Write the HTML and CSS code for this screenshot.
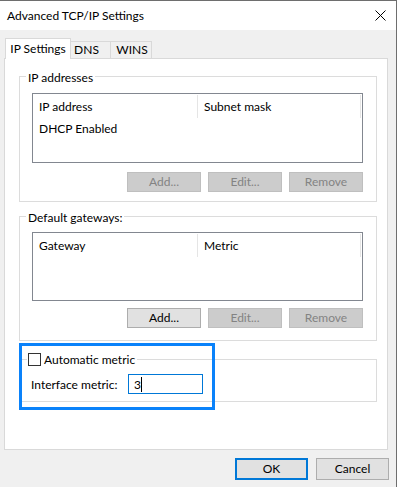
FILE: index.html
```html
<!DOCTYPE html>
<html>
<head>
<meta charset="utf-8">
<link rel="stylesheet" href="styles.css">
</head>
<body>
<div class="window">
  <div class="titlebar">
    <span class="title">Advanced TCP/IP Settings</span>
    <svg class="close" width="11" height="11" viewBox="0 0 11 11"><path d="M0.5 0.5 L10.5 10.5 M10.5 0.5 L0.5 10.5" stroke="#000" stroke-width="1" fill="none"/></svg>
  </div>
  <div class="client">
    <div class="tabs">
      <div class="tab active">IP Settings</div>
      <div class="tab t-dns">DNS</div>
      <div class="tab t-wins">WINS</div>
    </div>
    <div class="panel">
      <div class="group g1">
        <span class="legend">IP addresses</span>
        <div class="list l1">
          <div class="lhead">
            <div class="col c1">IP address</div>
            <div class="col c2">Subnet mask</div>
          </div>
          <div class="lrow">
            <div class="col c1">DHCP Enabled</div>
          </div>
        </div>
        <div class="btnrow r1">
          <div class="btn disabled">Add...</div>
          <div class="btn disabled">Edit...</div>
          <div class="btn disabled">Remove</div>
        </div>
      </div>
      <div class="group g2">
        <span class="legend">Default gateways:</span>
        <div class="list l2">
          <div class="lhead">
            <div class="col c1">Gateway</div>
            <div class="col c2">Metric</div>
          </div>
        </div>
        <div class="btnrow r2">
          <div class="btn">Add...</div>
          <div class="btn disabled">Edit...</div>
          <div class="btn disabled">Remove</div>
        </div>
      </div>
      <div class="group g3">
        <span class="legend chk"><span class="box"></span><span>Automatic metric</span></span>
        <div class="metric">
          <span class="mlabel">Interface metric:</span>
          <div class="input"><span>3</span><span class="caret"></span></div>
        </div>
      </div>
    </div>
    <div class="footer">
      <div class="btn big default">OK</div>
      <div class="btn big">Cancel</div>
    </div>
  </div>
  <div class="highlight"></div>
</div>
</body>
</html>
```
FILE: styles.css
```css
html, body {
  margin: 0;
  padding: 0;
}
body {
  width: 397px;
  height: 487px;
  overflow: hidden;
  font-family: "Lato", "Noto Sans", sans-serif;
  font-size: 12px;
  color: #000;
  background: #f0f0f0;
}
.window {
  position: relative;
  width: 397px;
  height: 487px;
  box-sizing: border-box;
  border-top: 1px solid #6e6e6e;
  border-right: 1px solid #6e6e6e;
  background: #f0f0f0;
}
.titlebar {
  height: 29px;
  background: #fff;
  display: flex;
  align-items: center;
  justify-content: space-between;
  padding: 0 10px 0 7px;
}
.title {
  line-height: 16px;
  margin-top: 0px;
}
.close {
  display: block;
  margin-top: -1px;
}
.client {
  padding-top: 8px;
}
.tabs {
  display: flex;
  align-items: flex-end;
  height: 20px;
  padding-left: 5px;
  position: relative;
  z-index: 2;
}
.tab {
  box-sizing: border-box;
  height: 17px;
  border: 1px solid #d9d9d9;
  border-bottom: none;
  border-left: none;
  background: #f0f0f0;
  line-height: 16px;
  text-align: center;
}
.tab.active {
  width: 66px;
  height: 21px;
  margin-bottom: -1px;
  border-left: 1px solid #d9d9d9;
  background: #fff;
  line-height: 19px;
}
.t-dns { width: 40px; padding-right: 10px; padding-left: 2px; }
.t-wins { width: 41px; padding-left: 2px; }
.panel {
  box-sizing: border-box;
  width: 384px;
  height: 392px;
  margin-left: 4px;
  border: 1px solid #d9d9d9;
  background: #fff;
  padding: 17px 0 0 14px;
  position: relative;
  z-index: 1;
}
.group {
  position: relative;
  box-sizing: border-box;
  width: 358px;
  border: 1px solid #dcdcdc;
  padding-left: 12px;
}
.g1 { height: 126px; padding-top: 16px; }
.g2 { height: 125px; padding-top: 15px; margin-top: 14px; }
.g3 { height: 43px; margin-top: 18px; padding-left: 11px; padding-top: 14px; }
.legend {
  position: absolute;
  top: -7px;
  left: 6px;
  padding: 0 2px;
  background: #fff;
  line-height: 16px;
}
.legend.chk {
  display: flex;
  align-items: center;
  left: 7px;
  top: -8px;
  padding: 0 2px 0 1px;
}
.box {
  width: 13px;
  height: 13px;
  box-sizing: border-box;
  border: 1px solid #333;
  background: #fff;
  margin-right: 3px;
  margin-top: -1px;
}
.list {
  box-sizing: border-box;
  width: 331px;
  border: 1px solid #828790;
  background: #fff;
}
.l1 { height: 70px; }
.l2 { height: 69px; }
.lhead {
  display: flex;
  height: 24px;
}
.col {
  box-sizing: border-box;
  padding-left: 6px;
  line-height: 24px;
}
.lhead .c1 {
  width: 165px;
  border-right: 1px solid #e5e5e5;
  margin-top: 1px;
  line-height: 24px;
  height: 23px;
}
.lhead .c2 {
  width: 163px;
  border-right: 1px solid #e5e5e5;
  margin-top: 1px;
  line-height: 24px;
  height: 23px;
}
.lrow {
  height: 20px;
  display: flex;
}
.lrow .col {
  line-height: 21px;
}
.btnrow {
  display: flex;
  gap: 7px;
  justify-content: flex-end;
  width: 331px;
  height: 20px;
}
.r1 { margin-top: 9px; }
.r2 { margin-top: 7px; }
.btn {
  box-sizing: border-box;
  width: 74px;
  height: 20px;
  border: 1px solid #adadad;
  background: #e1e1e1;
  text-align: center;
  line-height: 18px;
}
.btn.disabled {
  background: #cccccc;
  border-color: #bfbfbf;
  color: #838383;
}
.metric {
  display: flex;
  align-items: center;
  height: 20px;
}
.mlabel {
  width: 97px;
}
.input {
  box-sizing: border-box;
  width: 75px;
  height: 20px;
  border: 1px solid #0078d7;
  background: #fff;
  display: flex;
  align-items: center;
  padding-left: 5px;
}
.caret {
  width: 1px;
  height: 15px;
  background: #000;
  margin-left: 0px;
}
.footer {
  display: flex;
  justify-content: flex-end;
  gap: 8px;
  padding-right: 7px;
  margin-top: 8px;
}
.btn.big {
  width: 73px;
  height: 22px;
  line-height: 20px;
}
.btn.default {
  border: 2px solid #0078d7;
  line-height: 18px;
}
.highlight {
  position: absolute;
  left: 19px;
  top: 342px;
  width: 196px;
  height: 67px;
  box-sizing: border-box;
  border: 3px solid #0a82fa;
  z-index: 5;
}
```
